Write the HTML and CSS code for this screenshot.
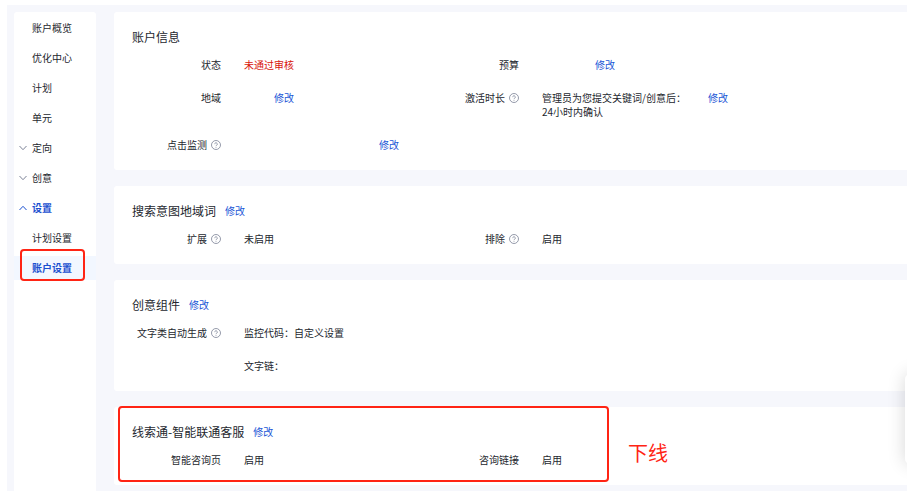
FILE: index.html
```html
<!DOCTYPE html>
<html lang="zh-CN">
<head>
<meta charset="utf-8">
<meta name="viewport" content="width=device-width, initial-scale=1">
<title>账户设置</title>
<link rel="stylesheet" href="styles.css">
</head>
<body>
<svg class="defs" aria-hidden="true">
  <symbol id="help" viewBox="0 0 10 10">
    <circle cx="5" cy="5" r="4.5"/>
    <path d="M3.7 4.1a1.3 1.3 0 1 1 2 1.1c-.5.3-.7.5-.7 1M5 7v.7"/>
  </symbol>
  <symbol id="down" viewBox="0 0 8 6"><path d="M.5 1 4 4.7 7.5 1"/></symbol>
  <symbol id="up" viewBox="0 0 8 6"><path d="M.5 5 4 1.3 7.5 5"/></symbol>
</svg>
<div class="shell">
  <nav class="sidebar">
    <a class="item" href="#">账户概览</a>
    <a class="item" href="#">优化中心</a>
    <a class="item" href="#">计划</a>
    <a class="item" href="#">单元</a>
    <button class="item" type="button"><svg class="chevron"><use href="#down"/></svg>定向</button>
    <button class="item" type="button"><svg class="chevron"><use href="#down"/></svg>创意</button>
    <button class="item open" type="button"><svg class="chevron"><use href="#up"/></svg>设置</button>
    <a class="item" href="#">计划设置</a>
    <a class="item active" href="#">账户设置<span class="mark mark-item"></span></a>
  </nav>
  <main class="content">
    <section class="card">
      <h2 class="title">账户信息</h2>
      <div class="fields">
        <div class="field"><span class="label">状态</span><span class="value error">未通过审核</span></div>
        <div class="field"><span class="label">预算</span><span class="value blank-medium"></span><a class="edit" href="#">修改</a></div>
        <div class="field"><span class="label">地域</span><span class="value blank-small"></span><a class="edit" href="#">修改</a></div>
        <div class="field"><span class="label">激活时长<svg class="help"><use href="#help"/></svg></span><span class="value note">管理员为您提交关键词/创意后：<br>24小时内确认</span><a class="edit" href="#">修改</a></div>
        <div class="field"><span class="label">点击监测<svg class="help"><use href="#help"/></svg></span><span class="value blank-large"></span><a class="edit" href="#">修改</a></div>
      </div>
    </section>
    <section class="card">
      <h2 class="title">搜索意图地域词<a class="edit" href="#">修改</a></h2>
      <div class="fields">
        <div class="field"><span class="label">扩展<svg class="help"><use href="#help"/></svg></span><span class="value">未启用</span></div>
        <div class="field"><span class="label">排除<svg class="help"><use href="#help"/></svg></span><span class="value">启用</span></div>
      </div>
    </section>
    <section class="card">
      <h2 class="title">创意组件<a class="edit" href="#">修改</a></h2>
      <div class="fields">
        <div class="field"><span class="label">文字类自动生成<svg class="help"><use href="#help"/></svg></span><span class="value lines"><span>监控代码：自定义设置</span><span>文字链：</span></span></div>
      </div>
    </section>
    <section class="card">
      <h2 class="title">线索通-智能联通客服<a class="edit" href="#">修改</a></h2>
      <div class="fields">
        <div class="field"><span class="label">智能咨询页</span><span class="value">启用</span></div>
        <div class="field"><span class="label">咨询链接</span><span class="value">启用</span></div>
      </div>
      <span class="mark mark-card"></span>
      <span class="remark">下线</span>
    </section>
  </main>
  <aside class="drawer"></aside>
</div>
</body>
</html>
```

FILE: styles.css
```css
* { box-sizing: border-box; }

body {
  margin: 0;
  padding: 5px 5px 10px 7px;
  background: #fff;
  color: #24272e;
  font: 10px/14px "Noto Sans CJK SC", sans-serif;
}

a { color: inherit; text-decoration: none; }

.defs { position: absolute; width: 0; height: 0; }

.shell {
  position: relative;
  display: flex;
  gap: 18px;
  padding: 7px 0 0 7px;
  overflow: hidden;
  background: #f6f7fc;
}

/* Sidebar */
.sidebar {
  display: flex;
  flex-direction: column;
  gap: 6px;
  flex: 0 0 82px;
  padding-top: 4px;
  border-radius: 3px 3px 0 0;
  background: #fff;
}

.item {
  position: relative;
  display: flex;
  align-items: center;
  height: 24px;
  padding: 0 0 0 18px;
  border: 0;
  background: none;
  color: inherit;
  font: inherit;
}

.item.open, .item.active { color: #1a50d0; font-weight: 700; }
.item.active { background: #f2f7ff; }

.chevron {
  width: 8px;
  height: 6px;
  margin: 0 5px 0 -13px;
  fill: none;
  stroke: #7b8296;
}

.open .chevron { stroke: #1a50d0; }

/* Cards */
.content {
  display: flex;
  flex: 1;
  flex-direction: column;
  gap: 16px;
  min-width: 0;
  padding-bottom: 6px;
}

.card {
  position: relative;
  padding: 16px 0 18px 18px;
  border-radius: 3px 0 0 3px;
  background: #fff;
}

.title {
  display: flex;
  align-items: center;
  gap: 9px;
  margin: 0 0 12px;
  font-size: 12px;
  line-height: 18px;
  font-weight: 400;
}

.edit { color: #1a56d6; font-size: 10px; }

.fields {
  display: grid;
  grid-template-columns: 298px 1fr;
  row-gap: 19px;
}

.field { display: flex; align-items: flex-start; }

.label {
  display: flex;
  align-items: center;
  justify-content: flex-end;
  gap: 4px;
  width: 89px;
  margin-right: 23px;
  white-space: nowrap;
}

.help {
  width: 10px;
  height: 10px;
  fill: none;
  stroke: #7b8296;
  stroke-width: 0.8px;
}

.lines { display: flex; flex-direction: column; gap: 19px; }
.error { color: #d9150c; }
.note { width: 166px; }
.blank-small { width: 30px; }
.blank-medium { width: 53px; }
.blank-large { width: 135px; }

/* Review marks over the page */
.mark {
  position: absolute;
  border: 2px solid #ff2414;
  border-radius: 4px;
  pointer-events: none;
}

.mark-item { inset: -7px 11px -1px 6px; }
.mark-card { top: -1px; bottom: 3px; left: 4px; width: 491px; }

.remark {
  position: absolute;
  top: 32px;
  left: 514px;
  color: #ff2414;
  font-size: 20px;
  line-height: 28px;
}

.drawer {
  position: absolute;
  right: -30px;
  bottom: 27px;
  width: 32px;
  height: 90px;
  border-radius: 5px;
  background: #fff;
  box-shadow: 0 0 18px rgba(0, 0, 0, 0.16);
}
```
